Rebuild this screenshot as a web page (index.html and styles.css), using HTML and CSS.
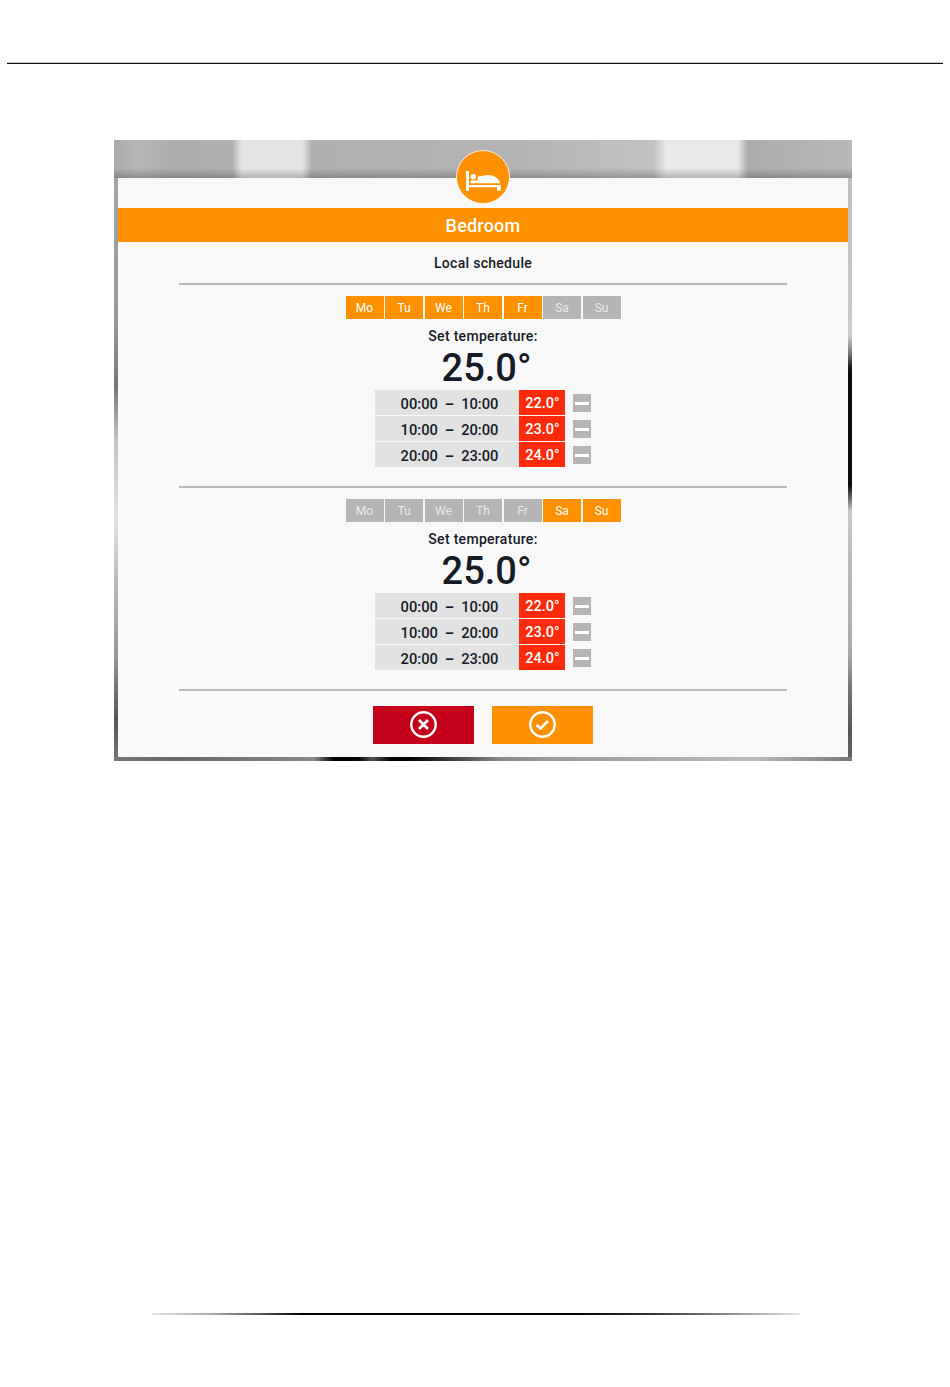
FILE: index.html
```html
<!DOCTYPE html>
<html lang="en">
<head>
    <meta charset="UTF-8">
    <meta name="viewport" content="width=device-width, initial-scale=1.0">
    <title>Bedroom - Local schedule</title>
    <link rel="stylesheet" href="styles.css">
</head>
<body>
    <div class="top-rule"></div>

    <div class="frame">
        <div class="panel">
            <div class="room-icon">
                <svg width="54" height="54" viewBox="0 0 54 54">
                    <circle cx="27" cy="27" r="26.5" fill="#ff9000" stroke="#fbeedd" stroke-width="1"/>
                    <path d="M10 21h3v14h28h3.700v5.700h-3.700v-3.400H13v3.400h-3z" fill="#fff"/>
                    <circle cx="17.300" cy="26.700" r="2.700" fill="#fff"/>
                    <path d="M14.500 33.300v-2.800h7l.5-4 9.500-1.500c6 .3 11 2.500 12.700 8.300z" fill="#fff"/>
                </svg>
            </div>
            <div class="title-bar">Bedroom</div>
            <div class="subtitle">Local schedule</div>

            <div class="schedule">
                <div class="days">
                    <span class="day on">Mo</span>
                    <span class="day on">Tu</span>
                    <span class="day on">We</span>
                    <span class="day on">Th</span>
                    <span class="day on">Fr</span>
                    <span class="day">Sa</span>
                    <span class="day">Su</span>
                </div>
                <div class="set-label">Set temperature:</div>
                <div class="set-value">25.0°</div>
                <div class="row">
                    <div class="time"><span>00:00</span><span class="dash">–</span><span>10:00</span></div>
                    <div class="temp">22.0°</div>
                    <button class="minus"></button>
                </div>
                <div class="row">
                    <div class="time"><span>10:00</span><span class="dash">–</span><span>20:00</span></div>
                    <div class="temp">23.0°</div>
                    <button class="minus"></button>
                </div>
                <div class="row">
                    <div class="time"><span>20:00</span><span class="dash">–</span><span>23:00</span></div>
                    <div class="temp">24.0°</div>
                    <button class="minus"></button>
                </div>
            </div>

            <div class="schedule">
                <div class="days">
                    <span class="day">Mo</span>
                    <span class="day">Tu</span>
                    <span class="day">We</span>
                    <span class="day">Th</span>
                    <span class="day">Fr</span>
                    <span class="day on">Sa</span>
                    <span class="day on">Su</span>
                </div>
                <div class="set-label">Set temperature:</div>
                <div class="set-value">25.0°</div>
                <div class="row">
                    <div class="time"><span>00:00</span><span class="dash">–</span><span>10:00</span></div>
                    <div class="temp">22.0°</div>
                    <button class="minus"></button>
                </div>
                <div class="row">
                    <div class="time"><span>10:00</span><span class="dash">–</span><span>20:00</span></div>
                    <div class="temp">23.0°</div>
                    <button class="minus"></button>
                </div>
                <div class="row">
                    <div class="time"><span>20:00</span><span class="dash">–</span><span>23:00</span></div>
                    <div class="temp">24.0°</div>
                    <button class="minus"></button>
                </div>
            </div>

            <div class="actions">
                <button class="action cancel">
                    <svg width="28" height="28" viewBox="0 0 28 28" fill="none" stroke="#fff">
                        <circle cx="13.500" cy="13.500" r="12.200" stroke-width="2.400"/>
                        <path d="M9 9l9 9M18 9l-9 9" stroke-width="2.800"/>
                    </svg>
                </button>
                <button class="action confirm">
                    <svg width="28" height="28" viewBox="0 0 28 28" fill="none" stroke="#fff">
                        <circle cx="13.500" cy="13.500" r="12.200" stroke-width="2.400"/>
                        <path d="M7.500 14l4 3.500 7.500-7.500" stroke-width="2.600"/>
                    </svg>
                </button>
            </div>
        </div>
    </div>

    <div class="bottom-rule"></div>
</body>
</html>
```

FILE: styles.css
```css
* {
    margin: 0;
    padding: 0;
    box-sizing: border-box;
}
body {
    background: #fff;
    height: 1387px;
    overflow: hidden;
    padding-top: 63px;
    font-family: 'Roboto', sans-serif;
    color: #161b27;
}
.top-rule {
    height: 1px;
    margin: 0 7px;
    background: #111;
    box-shadow: 0 -1px 0 #ccc;
}
.frame {
    width: 738px;
    height: 621px;
    margin: 76px 0 0 114px;
    padding: 38px 4px 4px;
    background:
        linear-gradient(180deg, rgba(0, 0, 0, 0) 28px, rgba(0, 0, 0, 0.22) 38px) top / 100% 38px no-repeat,
        linear-gradient(90deg, #ababab 0, #b6b6b6 22px, #adadad 60px, #b0b0b0 118px, #e6e6e6 128px, #e6e6e6 188px, #b0b0b0 198px, #b4b4b4 400px, #c2c2c2 540px, #e8e8e8 552px, #e8e8e8 624px, #adadad 634px, #b8b8b8 738px) top / 100% 38px no-repeat,
        linear-gradient(90deg, #777 0, #666 60px, #888 200px, #000 220px, #000 244px, #555 258px, #000 277px, #000 296px, #888 386px, #999 430px, #bbb 640px, #777 738px) bottom / 100% 4px no-repeat,
        linear-gradient(180deg, #a8a8a8 0, #999 180px, #777 247px, #c4c4c4 300px, #e2e2e2 380px, #bbb 440px, #999 513px, #555 580px, #777 621px) left / 4px 100% no-repeat,
        linear-gradient(180deg, #bbb 0, #ccc 195px, #888 210px, #0c0c0c 230px, #0c0c0c 345px, #ccc 372px, #bbb 413px, #aaa 513px, #777 547px, #555 590px, #666 621px) right / 4px 100% no-repeat;
}
.panel {
    position: relative;
    height: 579px;
    padding-top: 30px;
    background: #f8f8f8;
}
.room-icon {
    position: absolute;
    top: -28px;
    left: 338px;
    width: 54px;
    height: 54px;
}
.title-bar {
    height: 34px;
    line-height: 35px;
    text-align: center;
    background: #ff9000;
    color: #fff;
    font-size: 18px;
    font-weight: 500;
    letter-spacing: 0.2px;
}
.subtitle {
    height: 43px;
    margin: 0 61px;
    border-bottom: 2px solid #b9b9b9;
    line-height: 42px;
    text-align: center;
    font-size: 14px;
    font-weight: 500;
    letter-spacing: 0.3px;
}
.schedule {
    height: 203px;
    margin: 0 61px;
    padding-top: 11px;
    border-bottom: 2px solid #b9b9b9;
}
.days {
    display: flex;
    justify-content: center;
    gap: 1.5px;
}
.day {
    width: 38px;
    height: 23px;
    line-height: 24px;
    text-align: center;
    font-size: 12px;
    background: #b5b5b5;
    color: #e8e8e8;
}
.day.on {
    background: #ff9000;
    color: #fff;
}
.set-label {
    margin-top: 8px;
    height: 18px;
    line-height: 18px;
    text-align: center;
    font-size: 14px;
    font-weight: 500;
    letter-spacing: 0.3px;
}
.set-value {
    height: 45px;
    line-height: 46px;
    padding-left: 7px;
    text-align: center;
    font-size: 38px;
    font-weight: 500;
}
.row {
    display: flex;
    align-items: flex-start;
    height: 26px;
    margin-left: 196px;
}
.time {
    display: flex;
    justify-content: center;
    gap: 7px;
    width: 144px;
    height: 25px;
    padding-left: 5px;
    line-height: 28px;
    background: #e2e2e2;
    font-size: 14.7px;
    font-weight: 500;
}
.dash {
    font-weight: 700;
}
.temp {
    width: 46px;
    height: 25px;
    padding-left: 1px;
    line-height: 28px;
    text-align: center;
    background: #ff2a0c;
    color: #fff;
    font-size: 14.5px;
    font-weight: 500;
}
.minus {
    display: flex;
    align-items: center;
    justify-content: center;
    width: 18px;
    height: 18px;
    margin: 4px 0 0 8px;
    border: none;
    background: #b5b5b5;
}
.minus::before {
    content: '';
    width: 14px;
    height: 3px;
    background: #fff;
}
.actions {
    display: flex;
    justify-content: center;
    gap: 18px;
    margin-top: 15px;
}
.action {
    display: flex;
    align-items: center;
    justify-content: center;
    width: 101px;
    height: 38px;
    border: none;
}
.cancel {
    background: #c4001a;
}
.confirm {
    background: #ff9000;
}
.bottom-rule {
    height: 2px;
    margin: 552px 150px 0 152px;
    background: linear-gradient(90deg, #e4e4e4 0, #aaa 60px, #555 110px, #000 150px, #000 420px, #333 500px, #777 560px, #aaa 600px, #e8e8e8 648px);
}
```
